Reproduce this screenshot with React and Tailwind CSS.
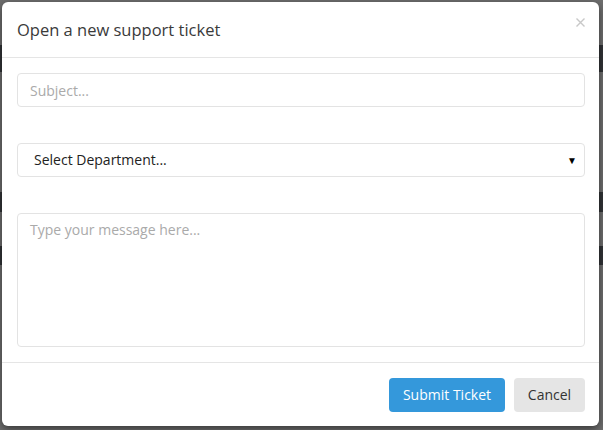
import React from 'react';

// Background page stripes dimmed behind the modal
const stripes = [
  { h: 'h-[45px]', dark: false },
  { h: 'h-[27px]', dark: true },
  { h: 'h-[120px]', dark: false },
  { h: 'h-[20px]', dark: true },
  { h: 'h-[34px]', dark: false },
  { h: 'h-[19px]', dark: true },
  { h: 'flex-1', dark: false },
];

const SupportTicketModal = () => (
  <div className="absolute left-[2px] top-[2px] w-[597px] h-[424px] bg-white rounded-md shadow-[0_3px_9px_rgba(0,0,0,0.5)] flex flex-col">
    {/* Header */}
    <div className="flex items-start justify-between pl-[15px] pr-[14px] py-[15px] border-b border-[#e5e5e5]">
      <h4 className="text-[16.5px] leading-[25px] text-[#3a3a3a] font-normal">Open a new support ticket</h4>
      <button className="text-[#c8c8c8] mt-[1px]">
        <svg width="9" height="9" viewBox="0 0 9 9">
          <path d="M0.5 0.5 L8.5 8.5 M8.5 0.5 L0.5 8.5" stroke="currentColor" strokeWidth="1.4" />
        </svg>
      </button>
    </div>

    {/* Body */}
    <div className="flex flex-col gap-[36px] pl-[15px] pr-[14px] py-[15px]">
      <input
        type="text"
        placeholder="Subject..."
        className="w-full h-[34px] px-3 text-sm text-[#333] placeholder-[#aaa] border border-[#e3e3e3] rounded focus:outline-none"
      />
      <div className="h-[34px] w-full border border-[#e3e3e3] rounded flex items-center pl-4 pr-[7px]">
        <span className="text-sm text-[#222] flex-1">Select Department...</span>
        <span className="text-[10px] text-black">▼</span>
      </div>
      <textarea
        placeholder="Type your message here..."
        className="w-full h-[134px] px-3 py-[6px] text-sm text-[#333] placeholder-[#aaa] border border-[#e3e3e3] rounded resize-none focus:outline-none"
      />
    </div>

    {/* Footer */}
    <div className="flex justify-end gap-[9px] px-[14px] py-[15px] border-t border-[#e5e5e5]">
      <button className="w-[116px] h-[34px] rounded bg-[#3498db] text-white text-sm">Submit Ticket</button>
      <button className="w-[71px] h-[34px] rounded bg-[#e5e5e5] text-[#333] text-sm">Cancel</button>
    </div>
  </div>
);

export default function App() {
  return (
    <div className="relative w-[603px] h-[430px] overflow-hidden font-['Open_Sans',sans-serif]">
      <div className="flex flex-col h-full">
        {stripes.map((s, i) => (
          <div key={i} className={`${s.h} ${s.dark ? 'bg-[#323437]' : 'bg-[#6e6e6e]'}`} />
        ))}
      </div>
      <SupportTicketModal />
    </div>
  );
}
